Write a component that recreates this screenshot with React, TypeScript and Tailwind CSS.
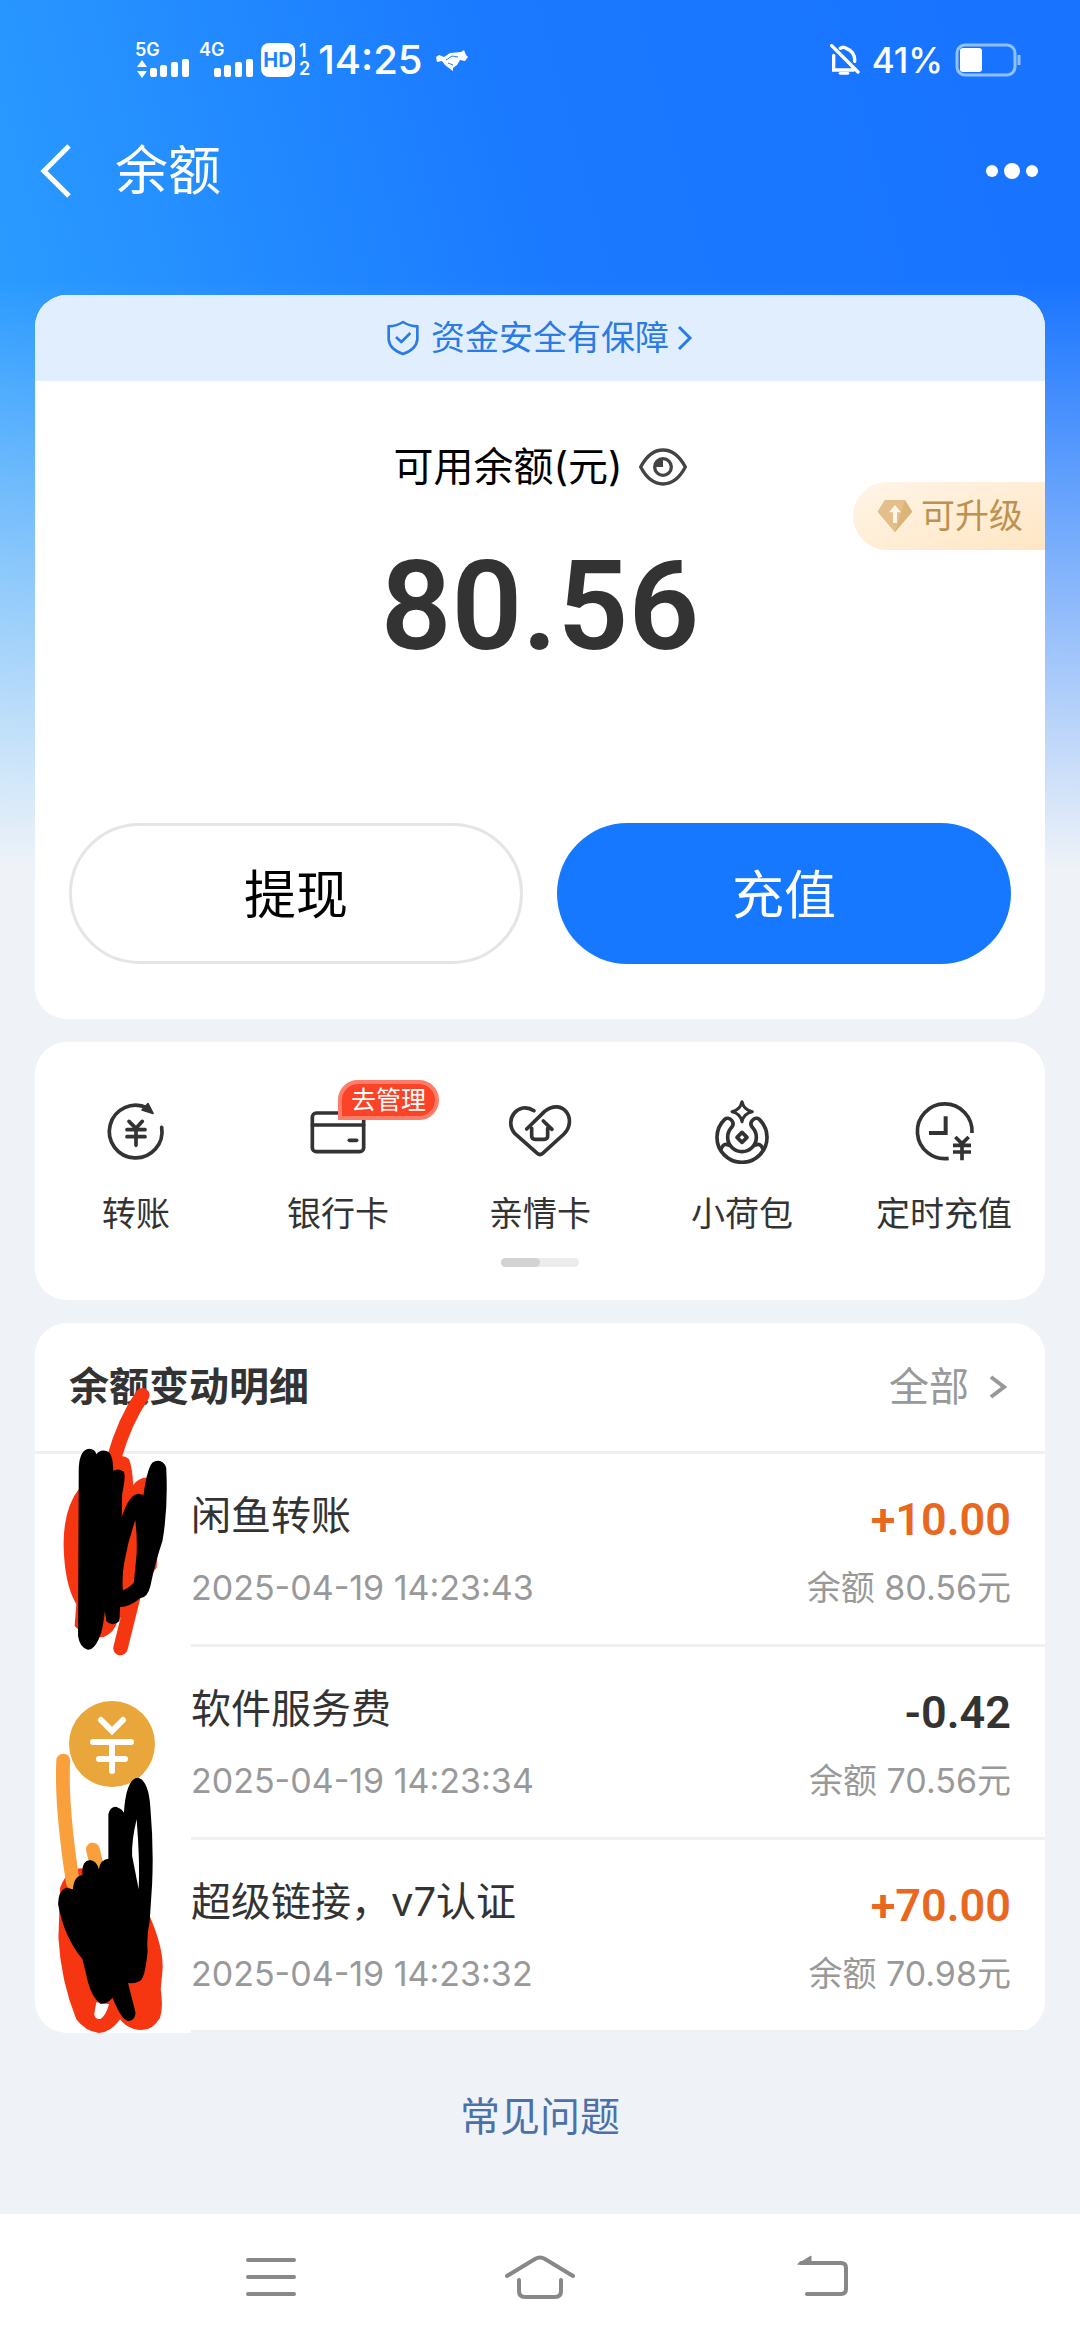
import type { ReactNode } from 'react'
import clsx from 'clsx'

type Shortcut = {
  label: string
  icon: ReactNode
  badge?: string
}

type Entry = {
  id: number
  title: string
  time: string
  amount: string
  balance: string
  income: boolean
  hasIcon?: boolean
}

const entries: Entry[] = [
  { id: 1, title: '闲鱼转账', time: '2025-04-19 14:23:43', amount: '+10.00', balance: '余额 80.56元', income: true },
  { id: 2, title: '软件服务费', time: '2025-04-19 14:23:34', amount: '-0.42', balance: '余额 70.56元', income: false, hasIcon: true },
  { id: 3, title: '超级链接，v7认证', time: '2025-04-19 14:23:32', amount: '+70.00', balance: '余额 70.98元', income: true },
]

function ShortcutIcon({ viewBox, children }: { viewBox: string; children: ReactNode }) {
  return (
    <svg
      className="h-16 w-16 text-[#333]"
      viewBox={viewBox}
      fill="none"
      stroke="currentColor"
      strokeWidth={11}
      strokeLinecap="round"
      strokeLinejoin="round"
      aria-hidden="true"
    >
      {children}
    </svg>
  )
}

const shortcuts: Shortcut[] = [
  {
    label: '转账',
    icon: (
      <ShortcutIcon viewBox="192 120 192 192">
        <path d="M365 202A79 79 0 1 1 322 144" />
        <path d="M324 131L339 160L306 150Z" fill="currentColor" strokeWidth={5} />
        <path d="M267 184L288 205L307 184M288 205V256M261 209H315M261 230H315" />
      </ShortcutIcon>
    ),
  },
  {
    label: '银行卡',
    badge: '去管理',
    icon: (
      <ShortcutIcon viewBox="797 120 192 192">
        <rect x="816" y="159" width="154" height="116" rx="12" />
        <path d="M816 195H970" />
        <path d="M927 241H949" />
      </ShortcutIcon>
    ),
  },
  {
    label: '亲情卡',
    icon: (
      <ShortcutIcon viewBox="-98 120 192 192">
        <path d="M-20 152C-66 122 -112 178 -78 220L-10 280Q-2 287 6 280L70 222C112 178 66 112 12 154L-42 207" />
        <path d="M8 183L34 208M-27 205V228Q-27 238 -16 238H10Q21 238 21 228V205" />
      </ShortcutIcon>
    ),
  },
  {
    label: '小荷包',
    icon: (
      <ShortcutIcon viewBox="510 120 192 192">
        <path d="M606 125Q611 150 637 155Q611 160 606 185Q601 160 576 155Q601 150 606 125Z" strokeWidth={9} />
        <path d="M554 178A75 75 0 1 0 658 178C646 168 624 185 637 202A43 43 0 1 1 575 202C588 185 566 168 554 178Z" />
        <path d="M543 268Q549 247 568 256M669 268Q663 247 644 256" />
        <path d="M606 217L621 232L606 247L591 232Z" />
      </ShortcutIcon>
    ),
  },
  {
    label: '定时充值',
    icon: (
      <ShortcutIcon viewBox="1116 120 192 192">
        <g strokeLinecap="butt">
          <path d="M1296 219A82 82 0 1 0 1226 295" />
          <path d="M1217 169V219H1167" strokeWidth={12} strokeLinejoin="miter" />
          <path d="M1246 231L1266 251L1286 231M1266 251V301M1239 256H1293M1239 276H1293" />
        </g>
      </ShortcutIcon>
    ),
  },
]

function Signal({ label, active }: { label: string; active?: boolean }) {
  return (
    <div className="flex flex-col">
      <span className="h-[17px] text-[18px] font-semibold leading-[17px]">{label}</span>
      <svg className="h-[21px] w-[54px]" viewBox="0 0 54 21" fill="currentColor" aria-hidden="true">
        {active && <path d="M7 2L12 9H2ZM7 20L12 13H2Z" />}
        <rect x="15" y="10" width="7" height="9" rx="2" />
        <rect x="25" y="7" width="7" height="12" rx="2" />
        <rect x="36" y="4" width="7" height="15" rx="2" />
        <rect x="47" y="1" width="7" height="18" rx="2" />
      </svg>
    </div>
  )
}

function StatusBar() {
  return (
    <div className="flex h-[120px] items-center justify-between pl-[135px] pr-[59px] text-white">
      <div className="flex items-center">
        <div className="flex gap-[10px]">
          <Signal label="5G" active />
          <Signal label="4G" />
        </div>
        <span className="ml-2 flex h-[34px] w-[34px] items-center justify-center rounded-lg bg-white text-[20px] font-bold text-[#1f83ff]">
          HD
        </span>
        <span className="ml-1 flex flex-col text-[18px] font-semibold leading-[18px]">
          <span>1</span>
          <span>2</span>
        </span>
        <time className="ml-2 text-[40px] font-medium leading-[48px]">14:25</time>
        <svg className="ml-3 h-[26px] w-[34px]" viewBox="0 0 34 26" fill="currentColor" aria-hidden="true">
          <path d="M1 10L4 8L9 10L15 6L26 5L29 3L31 8L33 10L30 14L25 13L22 18L18 21V24L15 22L10 18L7 14L2 15Z" />
          <path d="M11 13L17 9L23 10M13 16L18 18" stroke="#1f83ff" strokeWidth="1" fill="none" />
        </svg>
      </div>
      <div className="flex items-center">
        <svg className="h-8 w-[30px]" viewBox="0 0 90 96" fill="none" stroke="currentColor" strokeWidth="10" aria-hidden="true">
          <path d="M5 5L84 84M11 34V78H70M31 13Q40 6 49 13Q76 24 74 52" strokeLinecap="round" />
          <path d="M30 88H54" strokeWidth="8" strokeLinecap="round" />
        </svg>
        <span className="ml-3 text-[35px] font-medium leading-[48px]">41%</span>
        <svg className="ml-3 h-[34px] w-[66px]" viewBox="0 0 66 34" fill="none" aria-hidden="true">
          <rect x="2" y="2" width="58" height="30" rx="8" stroke="#8fc0ff" strokeWidth="3" />
          <path d="M64 12V22" stroke="#8fc0ff" strokeWidth="3" />
          <rect x="5" y="5" width="22" height="24" rx="3" fill="#fff" />
        </svg>
      </div>
    </div>
  )
}

function Header() {
  return (
    <header className="flex h-[102px] items-center px-[39px] text-white">
      <button type="button" aria-label="返回">
        <svg className="h-[54px] w-8" viewBox="0 0 32 54" fill="none" stroke="currentColor" strokeWidth="5" aria-hidden="true">
          <path d="M30 2L5 27L30 52" />
        </svg>
      </button>
      <h1 className="ml-11 text-[53px] leading-[60px]">余额</h1>
      <button type="button" aria-label="更多" className="ml-auto">
        <svg className="h-4 w-[60px]" viewBox="0 0 60 16" fill="currentColor" aria-hidden="true">
          <circle cx="11" cy="8" r="6" />
          <circle cx="31" cy="8" r="8" />
          <circle cx="51" cy="8" r="6" />
        </svg>
      </button>
    </header>
  )
}

function BalanceCard() {
  return (
    <section className="relative overflow-hidden rounded-[32px] bg-white">
      <a href="#security" className="flex h-[86px] items-center justify-center bg-[#e1eefe] text-[#2a7be4]">
        <svg className="h-9 w-8" viewBox="0 0 96 108" fill="none" stroke="currentColor" strokeWidth="8" strokeLinejoin="round" aria-hidden="true">
          <path d="M48 6Q66 18 91 19V58Q88 88 48 102Q8 88 5 58V19Q30 18 48 6Z" />
          <path d="M27 51L43 66L70 39" />
        </svg>
        <span className="ml-3 text-[34px] leading-[48px]">资金安全有保障</span>
        <svg className="ml-2 h-6 w-4" viewBox="0 0 16 24" fill="none" stroke="currentColor" strokeWidth="3" aria-hidden="true">
          <path d="M2 1L13 12L2 23" />
        </svg>
      </a>
      <div className="mt-[62px] flex items-center justify-center gap-4 text-black">
        <h2 className="text-[40px] leading-[48px]">可用余额(元)</h2>
        <button type="button" aria-label="隐藏余额">
          <svg className="h-[38px] w-12" viewBox="0 0 144 114" fill="none" stroke="#444" strokeWidth="10" aria-hidden="true">
            <path d="M5 57Q32 6 72 6Q112 6 139 57Q112 108 72 108Q32 108 5 57Z" strokeLinejoin="round" />
            <circle cx="72" cy="57" r="25" />
            <path d="M72 32V57H48A25 25 0 0 1 72 32Z" fill="#444" stroke="none" />
          </svg>
        </button>
      </div>
      <p className="mt-11 text-center font-['Roboto',sans-serif] text-[124px] font-semibold leading-[144px] text-[#333]">
        80.56
      </p>
      <a
        href="#upgrade"
        className="absolute right-0 top-[187px] flex h-[68px] items-center rounded-l-full bg-linear-to-br from-[#fff5e8] to-[#ffe6c4] pl-6 pr-[22px] text-[#bc9250]"
      >
        <svg className="h-[34px] w-9" viewBox="0 0 108 102" aria-hidden="true">
          <path d="M24 3H84L106 38L54 100L2 38Z" fill="#dcb378" />
          <path d="M24 3H84L54 100L2 38Z" fill="#e8c898" opacity="0.6" />
          <path d="M54 18L72 40H60V72H48V40H36Z" fill="#fff5e8" />
        </svg>
        <span className="ml-2 text-[34px] leading-[48px]">可升级</span>
      </a>
      <div className="mt-36 grid grid-cols-2 gap-[34px] px-[34px] pb-[55px] text-[52px] leading-[60px]">
        <button type="button" className="h-[141px] rounded-full border-3 border-[#e5e5e5] bg-white pt-1 text-black">提现</button>
        <button type="button" className="h-[141px] rounded-full bg-[#1677ff] pt-1 text-white">充值</button>
      </div>
    </section>
  )
}

function Shortcuts() {
  return (
    <nav className="rounded-[32px] bg-white pb-[33px] pt-[58px]">
      <div className="grid grid-cols-5">
        {shortcuts.map((item) => (
          <a key={item.label} href="#shortcut" className="flex flex-col items-center text-[#333]">
            <span className="relative">
              {item.icon}
              {item.badge && (
                <span className="absolute -top-5 left-8 flex h-10 items-center whitespace-nowrap rounded-full rounded-bl-none border-4 border-[#ff7c68] bg-[#fb4427] px-[9px] text-[25px] leading-8 text-white">
                  {item.badge}
                </span>
              )}
            </span>
            <span className="mt-[26px] text-[34px] leading-[48px]">{item.label}</span>
          </a>
        ))}
      </div>
      <div className="mx-auto mt-5 h-[9px] w-[78px] rounded-full bg-[#ececec]">
        <div className="h-full w-1/2 rounded-full bg-[#d3d3d3]" />
      </div>
    </nav>
  )
}

// Marker strokes drawn over the avatar column
function Scribbles() {
  return (
    <svg
      className="pointer-events-none absolute left-0 top-0.5 h-[710px] w-[155px]"
      viewBox="15 12 450 2130"
      preserveAspectRatio="none"
      aria-hidden="true"
    >
      <g fill="#f63511">
        <path d="M327 222Q275 300 245 410" fill="none" stroke="#f63511" strokeWidth="42" strokeLinecap="round" />
        <path d="M145 500Q98 560 98 670Q100 790 135 850L130 915Q160 952 215 948Q245 935 255 900L320 830Q350 760 368 740L370 705Q398 620 392 480L345 470Q320 466 300 492Q298 440 288 415Q270 398 240 410Z" />
        <path d="M263 982L302 820" fill="none" stroke="#f63511" strokeWidth="42" strokeLinecap="round" />
      </g>
      <path d="M142 440Q145 385 172 383Q190 384 193 400Q205 385 222 390Q242 395 242 450Q255 440 273 452Q279 465 268 520L267 588Q288 520 315 518L330 522Q342 430 360 422Q386 412 396 440Q402 560 385 660Q365 720 350 795Q342 830 320 832Q290 858 262 858L260 900Q240 920 222 900L218 870Q212 930 200 955Q185 988 168 986Q145 980 140 945Z" />
      <path d="M306 598Q312 640 310 700L302 785Q285 802 270 808Q267 760 275 720Q285 660 306 598Z" fill="#f63511" />
      <g transform="translate(0 1020)">
        <path d="M88 680Q110 620 155 622L297 585L316 685L352 775Q390 870 385 930L380 985Q388 1040 378 1070Q350 1120 300 1103Q275 1095 262 1075Q235 1115 200 1116Q160 1110 135 1075Q90 960 83 830Z" fill="#f63511" />
        <path d="M193 1024L230 1030Q220 1065 205 1074Q188 1076 187 1058Z" fill="#fff" />
        <path d="M97 298Q90 430 125 665M183 565L197 625" fill="none" stroke="#f9a03c" strokeWidth="40" strokeLinecap="round" />
        <path d="M228 460Q232 437 250 437Q268 443 273 455Q280 350 315 350Q345 360 350 440Q360 560 355 670L348 780Q338 830 342 870Q335 950 320 960Q300 970 285 965L307 1055Q305 1080 285 1080Q265 1075 240 1010Q225 1030 205 1028Q180 1010 168 960L153 895Q100 830 82 730Q82 690 105 680L125 685Q128 645 153 642Q148 600 175 597Q195 600 200 625Q205 595 228 593Z" />
        <path d="M310 475Q295 540 297 585L316 685Q320 600 310 475Z" fill="#fff" />
      </g>
    </svg>
  )
}

function YuanIcon() {
  return (
    <svg className="h-[86px] w-[86px]" viewBox="0 0 86 86" aria-hidden="true">
      <circle cx="43" cy="43" r="43" fill="#e9a63b" />
      <path d="M32 19L43 30L54 19M24 41H62M30 58H56M43 41V70" fill="none" stroke="#fff" strokeWidth="6" strokeLinecap="round" />
    </svg>
  )
}

function History() {
  return (
    <section className="relative overflow-hidden rounded-[32px] bg-white">
      <div className="flex h-[131px] items-center justify-between border-b-3 border-[#eef0f2] px-[34px]">
        <h2 className="text-[40px] font-bold leading-[48px] text-[#333]">余额变动明细</h2>
        <a href="#all" className="flex items-center gap-5 pr-1 text-[40px] leading-[48px] text-[#999]">
          全部
          <svg className="h-6 w-[18px]" viewBox="0 0 18 24" fill="none" stroke="currentColor" strokeWidth="4" aria-hidden="true">
            <path d="M2 2L15 12L2 22" />
          </svg>
        </a>
      </div>
      <ul>
        {entries.map((entry) => (
          <li key={entry.id} className="flex items-center gap-9 pl-[34px]">
            <span className="w-[86px] shrink-0">{entry.hasIcon && <YuanIcon />}</span>
            <div className="flex h-[193px] flex-1 justify-between border-b-3 border-[#eef0f2] pr-[34px] pt-[38px]">
              <div className="flex flex-col gap-6 leading-[48px]">
                <h3 className="text-[40px] text-[#333]">{entry.title}</h3>
                <time className="text-[34px] text-[#999]">{entry.time}</time>
              </div>
              <div className="flex flex-col gap-4 text-right">
                <span
                  className={clsx(
                    "font-['Roboto',sans-serif] text-[45px] font-semibold leading-[56px]",
                    entry.income ? 'text-[#e8681f]' : 'text-[#333]',
                  )}
                >
                  {entry.amount}
                </span>
                <span className="text-[34px] leading-[48px] text-[#999]">{entry.balance}</span>
              </div>
            </div>
          </li>
        ))}
      </ul>
      <Scribbles />
    </section>
  )
}

function SystemNav() {
  return (
    <footer className="mt-auto grid h-[126px] grid-cols-3 place-items-center bg-white px-[136px] text-[#888]">
      <button type="button" aria-label="最近任务">
        <svg className="h-11 w-[50px]" viewBox="0 0 50 44" fill="none" stroke="currentColor" strokeWidth="4" strokeLinecap="round" aria-hidden="true">
          <path d="M2 5H48M2 22H48M2 39H48" />
        </svg>
      </button>
      <button type="button" aria-label="主页">
        <svg className="h-11 w-[70px]" viewBox="0 0 70 44" fill="none" stroke="currentColor" strokeWidth="4" strokeLinecap="round" aria-hidden="true">
          <path d="M2 21L30 4Q35 1 40 4L68 21M14 25V36Q14 42 20 42H50Q56 42 56 36V25" />
        </svg>
      </button>
      <button type="button" aria-label="返回上一页">
        <svg className="h-11 w-[80px]" viewBox="0 0 80 44" fill="none" stroke="currentColor" strokeWidth="4" strokeLinecap="round" aria-hidden="true">
          <path d="M32 8H72Q77 8 77 13V34Q77 39 72 39H38" />
          <path d="M29 9L42 1V9Z" fill="currentColor" strokeWidth="1" />
        </svg>
      </button>
    </footer>
  )
}

export default function App() {
  return (
    <div className="flex min-h-screen flex-col bg-[#eff3f8] bg-[linear-gradient(to_bottom,transparent_280px,#eff3f8_870px),linear-gradient(75deg,#2fa4ff_0%,#1a79ff_55%,#1873ff_100%)] bg-[length:100%_870px] bg-no-repeat font-['Inter','Noto_Sans_CJK_SC',sans-serif]">
      <StatusBar />
      <Header />
      <main className="flex flex-col gap-[23px] px-[35px] pt-[73px]">
        <BalanceCard />
        <Shortcuts />
        <History />
      </main>
      <a href="#faq" className="mx-auto mt-[60px] text-[40px] leading-[48px] text-[#4c71a6]">
        常见问题
      </a>
      <SystemNav />
    </div>
  )
}
